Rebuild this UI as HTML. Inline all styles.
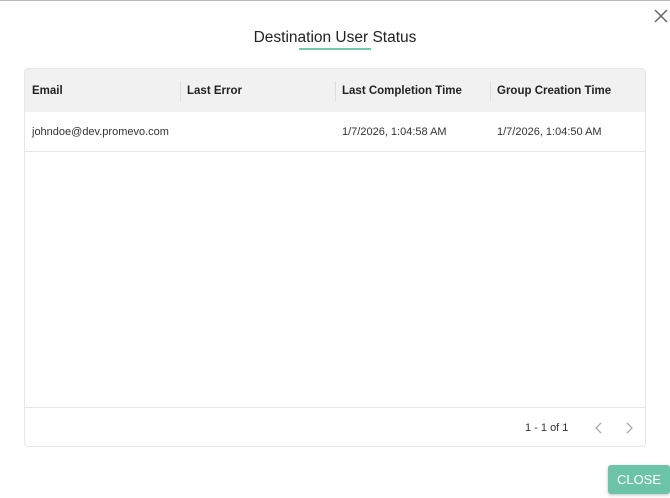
<!DOCTYPE html>
<html><head><style>
*{margin:0;padding:0;box-sizing:border-box}
body{width:670px;height:498px;background:#fff;font-family:"Liberation Sans",sans-serif;position:relative;overflow:hidden;color:#222}
.top{position:absolute;left:0;top:0;width:670px;height:1px;background:#bbb}
.x{position:absolute;left:654px;top:9px;width:14px;height:14px}
h1{position:absolute;top:29px;width:670px;text-align:center;font-weight:normal;font-size:15.5px;color:#222}
.ul{position:absolute;left:299px;top:48px;width:72px;height:2px;background:#72c6ab}
.tbl{position:absolute;left:24px;top:68px;width:622px;height:379px;border:1px solid #e6e6e6;border-radius:4px;overflow:hidden}
.hd{position:absolute;left:0;top:0;width:100%;height:43px;background:#f1f1f1}
.c{position:absolute;font-size:11px;line-height:14px;color:#333}
.hd .c{font-weight:bold;top:15px;font-size:11.5px;color:#222}
.sep{position:absolute;top:12px;width:1px;height:20px;background:#ddd}
.row{position:absolute;left:0;top:43px;width:100%;height:40px;border-bottom:1px solid #e6e6e6}
.row .c{top:13px}
.ft{position:absolute;left:0;top:338px;width:100%;border-top:1px solid #e6e6e6;height:40px}
.btn{position:absolute;left:608px;top:465px;width:62px;height:29px;background:#6cc4a8;border-radius:3px;color:#fff;font-size:13px;text-align:center;line-height:29px;box-shadow:0 1px 3px rgba(0,0,0,.25)}
</style></head><body>
<div class="top"></div>
<svg class="x" viewBox="0 0 14 14"><path d="M1 1L13 13M13 1L1 13" stroke="#666" stroke-width="1.5"/></svg>
<h1>Destination User Status</h1>
<div class="ul"></div>
<div class="tbl">
<div class="hd">
<div class="c" style="left:7px">Email</div>
<div class="sep" style="left:155px"></div>
<div class="c" style="left:162px">Last Error</div>
<div class="sep" style="left:310px"></div>
<div class="c" style="left:317px">Last Completion Time</div>
<div class="sep" style="left:465px"></div>
<div class="c" style="left:472px">Group Creation Time</div>
</div>
<div class="row">
<div class="c" style="left:7px">johndoe@dev.promevo.com</div>
<div class="c" style="left:317px">1/7/2026, 1:04:58 AM</div>
<div class="c" style="left:472px">1/7/2026, 1:04:50 AM</div>
</div>
<div class="ft">
<div class="c" style="left:500px;top:13px">1 - 1 of 1</div>
<svg style="position:absolute;left:569px;top:13px" width="10" height="14" viewBox="0 0 10 14"><path d="M7 2L2 7L7 12" stroke="#aaa" stroke-width="1.3" fill="none"/></svg>
<svg style="position:absolute;left:599px;top:13px" width="10" height="14" viewBox="0 0 10 14"><path d="M3 2L8 7L3 12" stroke="#aaa" stroke-width="1.3" fill="none"/></svg>
</div>
</div>
<div class="btn">CLOSE</div>
</body></html>
